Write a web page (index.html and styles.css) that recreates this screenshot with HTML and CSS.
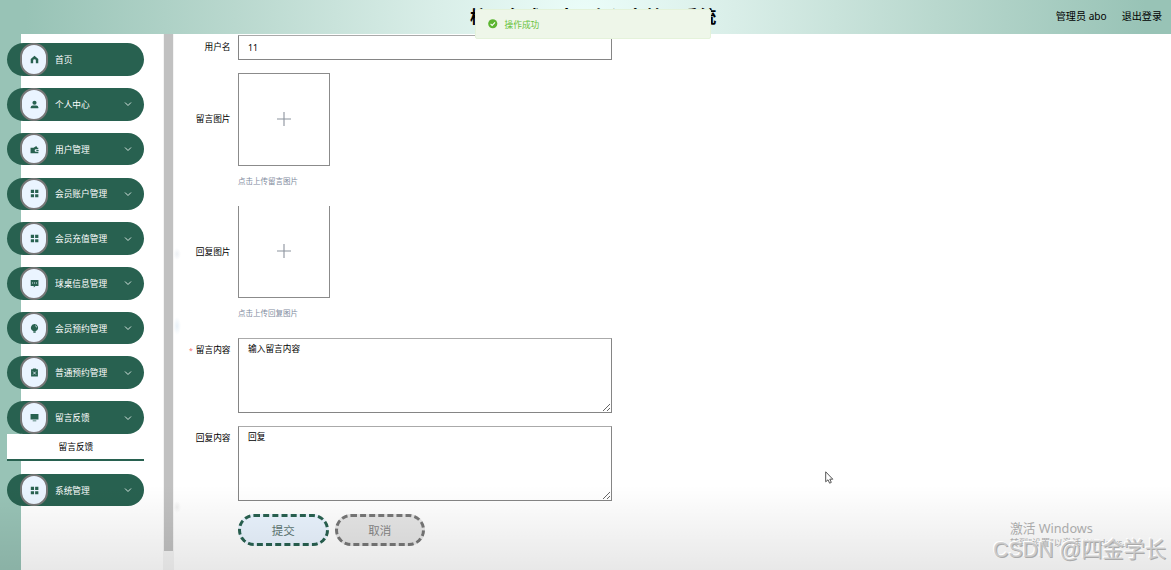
FILE: index.html
```html
<!DOCTYPE html>
<html lang="zh-CN">
<head>
    <meta charset="UTF-8">
    <meta name="viewport" content="width=device-width, initial-scale=1.0">
    <title>校园台球厅人员与设备管理系统</title>
    <link rel="stylesheet" href="styles.css">
</head>
<body>
    <header class="header">
        <h1 class="title">校园台球厅人员与设备管理系统</h1>
        <div class="user">
            <span>管理员 abo</span>
            <span>退出登录</span>
        </div>
    </header>

    <div class="layout">
        <nav class="sidebar">
            <div class="menu-item">
                <span class="icon"><svg viewBox="0 0 10 10"><path d="M5 .8 9.2 4.5V9.3H6.5V6.2a1.5 1.5 0 0 0-3 0V9.3H.8V4.5z"/></svg></span>
                <span class="name">首页</span>
            </div>
            <div class="menu-item">
                <span class="icon"><svg viewBox="0 0 10 10"><circle cx="5" cy="3" r="2.3"/><path d="M.8 9.2V8q0-2 2.2-2h4q2.2 0 2.2 2v1.2z"/></svg></span>
                <span class="name">个人中心</span>
                <svg class="arrow" viewBox="0 0 8 8"><path d="M1 2.5 4 5.5 7 2.5"/></svg>
            </div>
            <div class="menu-item">
                <span class="icon"><svg viewBox="0 0 10 10"><path d="M.6 3H4L7 1l1.2 2h1v1.8H6.5a1.3 1.3 0 0 0 0 2.6h2.8v1.8H.6z"/><path d="M7 5.6h2.6v1.2H7z"/></svg></span>
                <span class="name">用户管理</span>
                <svg class="arrow" viewBox="0 0 8 8"><path d="M1 2.5 4 5.5 7 2.5"/></svg>
            </div>
            <div class="menu-item">
                <span class="icon"><svg viewBox="0 0 10 10"><path d="M.9.9h3.6v3.6H.9zM5.7.9h3.6v3.6H5.7zM.9 5.7h3.6v3.6H.9zM5.7 5.7h3.6v3.6H5.7z"/></svg></span>
                <span class="name">会员账户管理</span>
                <svg class="arrow" viewBox="0 0 8 8"><path d="M1 2.5 4 5.5 7 2.5"/></svg>
            </div>
            <div class="menu-item">
                <span class="icon"><svg viewBox="0 0 10 10"><path d="M.9.9h3.6v3.6H.9zM5.7.9h3.6v3.6H5.7zM.9 5.7h3.6v3.6H.9zM5.7 5.7h3.6v3.6H5.7z"/></svg></span>
                <span class="name">会员充值管理</span>
                <svg class="arrow" viewBox="0 0 8 8"><path d="M1 2.5 4 5.5 7 2.5"/></svg>
            </div>
            <div class="menu-item">
                <span class="icon"><svg viewBox="0 0 10 10"><path d="M.8 1h8.6v6.8H6L4.2 9.5V7.8H.8z"/><path class="cut" d="M2.3 3.9h1.1V5H2.3zM4.5 3.9h1.1V5H4.5zM6.7 3.9h1.1V5H6.7z"/></svg></span>
                <span class="name">球桌信息管理</span>
                <svg class="arrow" viewBox="0 0 8 8"><path d="M1 2.5 4 5.5 7 2.5"/></svg>
            </div>
            <div class="menu-item">
                <span class="icon"><svg viewBox="0 0 10 10"><path d="M5 .1a3.9 3.9 0 0 1 2 7.3L6.3 8H3.7L3 7.4A3.9 3.9 0 0 1 5 .1zM3.7 8.4h2.6v1.3H3.7z"/><path class="cut" d="M6 1.5q1.7.8 1.6 2.3H7Q7 2.7 5.8 2.1z"/></svg></span>
                <span class="name">会员预约管理</span>
                <svg class="arrow" viewBox="0 0 8 8"><path d="M1 2.5 4 5.5 7 2.5"/></svg>
            </div>
            <div class="menu-item">
                <span class="icon"><svg viewBox="0 0 10 10"><path d="M1.2 1.5h2V.5h3.6v1h2v8H1.2z"/><path class="cross" d="m3.5 4 3 3.2M6.5 4l-3 3.2"/></svg></span>
                <span class="name">普通预约管理</span>
                <svg class="arrow" viewBox="0 0 8 8"><path d="M1 2.5 4 5.5 7 2.5"/></svg>
            </div>
            <div class="menu-item open">
                <span class="icon"><svg viewBox="0 0 10 10"><path d="M.6 1.2h8.8v6H.6zM3 8.2h4v.9H3z"/></svg></span>
                <span class="name">留言反馈</span>
                <svg class="arrow" viewBox="0 0 8 8"><path d="M1 2.5 4 5.5 7 2.5"/></svg>
            </div>
            <div class="submenu">留言反馈</div>
            <div class="menu-item">
                <span class="icon"><svg viewBox="0 0 10 10"><path d="M.9.9h3.6v3.6H.9zM5.7.9h3.6v3.6H5.7zM.9 5.7h3.6v3.6H.9zM5.7 5.7h3.6v3.6H5.7z"/></svg></span>
                <span class="name">系统管理</span>
                <svg class="arrow" viewBox="0 0 8 8"><path d="M1 2.5 4 5.5 7 2.5"/></svg>
            </div>
        </nav>
        <div class="scrollbar"><div class="thumb"></div></div>

        <main class="content">
            <div class="row">
                <label class="label">用户名</label>
                <input class="input" type="text" value="11">
            </div>
            <div class="row upload-row">
                <label class="label">留言图片</label>
                <div class="upload"><svg viewBox="0 0 16 16"><path d="M8 1v14M1 8h14"/></svg></div>
            </div>
            <div class="tip">点击上传留言图片</div>
            <div class="row upload-row">
                <label class="label">回复图片</label>
                <div class="upload no-top"><svg viewBox="0 0 16 16"><path d="M8 1v14M1 8h14"/></svg></div>
            </div>
            <div class="tip">点击上传回复图片</div>
            <div class="row">
                <label class="label required">留言内容</label>
                <textarea class="textarea">输入留言内容</textarea>
            </div>
            <div class="row">
                <label class="label">回复内容</label>
                <textarea class="textarea">回复</textarea>
            </div>
            <div class="buttons">
                <button class="btn submit">提交</button>
                <button class="btn cancel">取消</button>
            </div>
        </main>
    </div>

    <div class="message">
        <svg viewBox="0 0 10 10"><circle cx="5" cy="5" r="4.8"/><path d="m2.7 5.1 1.7 1.7 3-3.2"/></svg>
        <span>操作成功</span>
    </div>

    <div class="shade"></div>
    <div class="activate">
        <div class="activate-title">激活 Windows</div>
        <div class="activate-text">转到"设置"以激活 Windows。</div>
    </div>
    <div class="watermark">CSDN @四金学长</div>
    <svg class="cursor" viewBox="0 0 9 13"><path d="M.7.8v10l2.3-2 1.6 3.4 1.7-.8-1.5-3.2h3z"/></svg>
</body>
</html>
```
FILE: styles.css
```css
* {
    box-sizing: border-box;
}
body {
    margin: 0;
    height: 570px;
    overflow: hidden;
    position: relative;
    display: flex;
    flex-direction: column;
    background: #fff;
    color: #000;
    font-family: "Noto Sans", "Noto Sans CJK SC", sans-serif;
    font-size: 8.7px;
}
.header {
    height: 34px;
    flex: none;
    display: grid;
    grid-template-columns: 1fr auto;
    align-items: center;
    padding-right: 9px;
    background: radial-gradient(circle at 50% 50%, #ebfdf9 0, #d9eee8 150px, #b9d8ce 350px, #98c3b6 560px);
}
.title {
    margin: 0;
    padding-left: 470px;
    font-size: 17.6px;
    line-height: 32px;
    height: 34px;
    font-weight: bold;
    white-space: nowrap;
}
.user {
    display: flex;
    gap: 15px;
    font-size: 10.1px;
    line-height: 32px;
    height: 34px;
}
.layout {
    flex: 1;
    display: flex;
    min-height: 0;
}

/* left menu */
.sidebar {
    width: 163px;
    flex: none;
    padding: 9.3px 18.6px 0 7.4px;
    background: linear-gradient(to right, #98c3b6 21px, #fff 21px);
}
.menu-item {
    height: 32.7px;
    margin-bottom: 12.05px;
    display: flex;
    align-items: center;
    padding: 0 12px 0 12.6px;
    border-radius: 17px;
    background: #286150;
    color: #fff;
}
.menu-item.open {
    margin-bottom: 0;
}
.icon {
    width: 28.5px;
    height: 32.7px;
    flex: none;
    display: flex;
    align-items: center;
    justify-content: center;
    border: 2.5px solid #777;
    border-radius: 14px;
    background: #eaf4ff;
}
.icon svg {
    width: 9px;
    height: 9px;
    fill: #286150;
}
.icon .cut {
    fill: #eaf4ff;
}
.icon .cross {
    fill: none;
    stroke: #eaf4ff;
    stroke-width: .9;
}
.name {
    flex: 1;
    padding-left: 6.5px;
}
.arrow {
    width: 8px;
    height: 8px;
    fill: none;
    stroke: #d5e4df;
    stroke-width: 1;
}
.submenu {
    height: 27px;
    margin-bottom: 12.8px;
    line-height: 26px;
    text-align: center;
    background: #fff;
    border-bottom: 2px solid #286150;
}
.scrollbar {
    width: 11px;
    flex: none;
    padding: 0 1px;
    background: #f4f4f4;
}
.thumb {
    height: 517px;
    background: #c1c1c1;
}

/* form */
.content {
    flex: 1;
    padding: 1px 0 0 7px;
    background:
        radial-gradient(ellipse 4px 6px at 3px 220px, #eef1f5, transparent),
        radial-gradient(ellipse 4px 9px at 3px 292px, #e9f1f8, transparent),
        radial-gradient(ellipse 4px 6px at 3px 473px, #f1f1f1, transparent);
}
.row {
    display: flex;
    margin-bottom: 13px;
}
.label {
    width: 57px;
    flex: none;
    padding-right: 7.5px;
    text-align: right;
    line-height: 24px;
}
.required::before {
    content: "*";
    margin-right: 3px;
    color: #f56c6c;
    font-size: 7px;
}
.input, .textarea {
    width: 374px;
    border: 1px solid #858585;
    border-top-color: #aaa;
    border-radius: 0;
    background: transparent;
    color: #000;
    font: inherit;
    outline: none;
}
.input {
    height: 25px;
    padding: 0 9px;
}
.upload-row {
    align-items: center;
    margin-bottom: 7px;
}
.upload {
    width: 92px;
    height: 92.5px;
    display: flex;
    align-items: center;
    justify-content: center;
    border: 1px solid #8b8b8b;
}
.upload.no-top {
    border-top: none;
}
.upload svg {
    width: 16px;
    height: 16px;
    fill: none;
    stroke: #8c939d;
    stroke-width: 1.1;
}
.tip {
    height: 16px;
    margin: 0 0 17px 57px;
    color: #7f8b9e;
    font-size: 7.5px;
    line-height: 16px;
}
.textarea {
    height: 75px;
    padding: 4px 9px;
    line-height: 12.5px;
    resize: vertical;
}
.buttons {
    display: flex;
    gap: 6px;
    padding-left: 57px;
}
.btn {
    width: 90.5px;
    height: 32px;
    padding: 0;
    border: 3px dashed #286150;
    border-radius: 16px;
    background: #eaf4ff;
    color: #5d7672;
    font-family: inherit;
    font-size: 11.5px;
}
.btn.cancel {
    border-color: #777;
    background: #e6e6e6;
    color: #858585;
}

/* success message on top of the page */
.message {
    position: absolute;
    left: 475px;
    top: 9px;
    width: 236px;
    height: 30px;
    display: flex;
    align-items: center;
    gap: 7px;
    padding-left: 12px;
    border: 1px solid #e4f2da;
    border-radius: 2px;
    background: #eef6e9;
    color: #67c23a;
}
.message svg {
    width: 9.5px;
    height: 9.5px;
    fill: #5cb531;
}
.message path {
    fill: none;
    stroke: #fff;
    stroke-width: 1.1;
}

.shade {
    position: absolute;
    left: 0;
    right: 0;
    bottom: 0;
    height: 85px;
    background: linear-gradient(to bottom, rgba(0, 0, 0, 0), rgba(0, 0, 0, .09));
    pointer-events: none;
}
.activate {
    position: absolute;
    left: 1010px;
    top: 519px;
    color: #aaa;
    white-space: nowrap;
}
.activate-title {
    font-size: 12.7px;
    line-height: 18px;
}
.activate-text {
    font-size: 9.1px;
    line-height: 12px;
}
.watermark {
    position: absolute;
    left: 993px;
    top: 535px;
    color: rgba(205, 205, 205, .9);
    font-family: "Liberation Sans", "Noto Sans CJK SC", sans-serif;
    font-size: 21.3px;
    line-height: 30px;
    white-space: nowrap;
    text-shadow: 1px 1px 0 #aaa, -1px -1px 0 #fff;
}
.cursor {
    position: absolute;
    left: 825px;
    top: 471px;
    width: 9px;
    height: 13px;
    fill: #fff;
    stroke: #444;
    stroke-width: .9;
}
```
